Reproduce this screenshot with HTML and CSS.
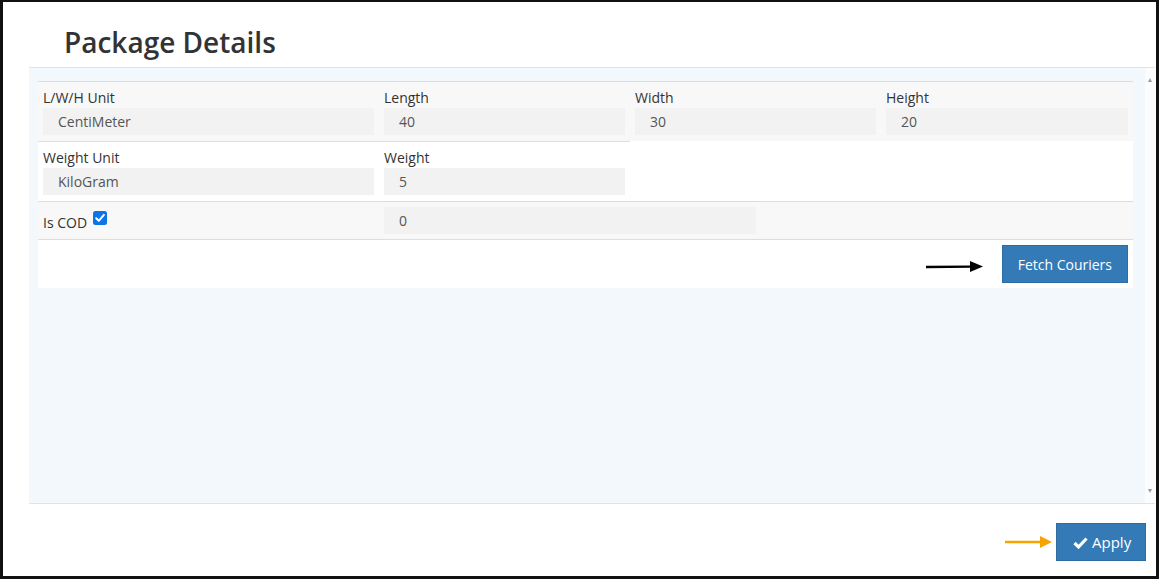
FILE: index.html
```html
<!DOCTYPE html>
<html>
<head>
<meta charset="utf-8">
<link rel="stylesheet" href="styles.css">
</head>
<body>
<div class="frame">
  <h1 class="title">Package Details</h1>
  <div class="panel">
    <div class="panel-body">
      <div class="row row-striped">
        <div class="cell">
          <div class="label">L/W/H Unit</div>
          <div class="input">CentiMeter</div>
        </div>
        <div class="cell">
          <div class="label">Length</div>
          <div class="input">40</div>
        </div>
        <div class="cell">
          <div class="label">Width</div>
          <div class="input">30</div>
        </div>
        <div class="cell">
          <div class="label">Height</div>
          <div class="input">20</div>
        </div>
      </div>
      <div class="row row-plain">
        <div class="cell cell-bordered">
          <div class="label">Weight Unit</div>
          <div class="input">KiloGram</div>
        </div>
        <div class="cell cell-bordered">
          <div class="label">Weight</div>
          <div class="input">5</div>
        </div>
      </div>
      <div class="row row-cod">
        <div class="cell cod-cell">
          <span class="cod-label">Is COD</span>
          <svg class="checkbox" width="14" height="14" viewBox="0 0 14 14">
            <rect x="0" y="0" width="14" height="14" rx="2.5" fill="#0b74e6"/>
            <path d="M3.2 7.2 L5.8 9.8 L10.9 3.9" fill="none" stroke="#fff" stroke-width="2" stroke-linecap="round" stroke-linejoin="round"/>
          </svg>
        </div>
        <div class="cell cod-input-cell">
          <div class="input input-cod">0</div>
        </div>
      </div>
      <div class="row row-action">
        <svg class="arrow" width="58" height="14" viewBox="0 0 58 14">
          <line x1="0" y1="7" x2="46" y2="6.6" stroke="#000" stroke-width="2.4"/>
          <polygon points="44,1 57,6.5 44,12" fill="#000"/>
        </svg>
        <button class="btn">Fetch Couriers</button>
      </div>
    </div>
    <div class="scrollbar">
      <span class="sb-arrow sb-up"></span>
      <span class="sb-arrow sb-down"></span>
    </div>
  </div>
  <div class="footer">
    <svg class="arrow-orange" width="48" height="14" viewBox="0 0 48 14">
      <line x1="0" y1="7" x2="36" y2="7" stroke="#f5a300" stroke-width="2.4"/>
      <polygon points="35,1 47,7 35,13" fill="#f5a300"/>
    </svg>
    <button class="btn btn-apply">
      <svg class="check" width="15" height="13" viewBox="0 0 15 13">
        <path d="M1.5 7 L5.5 11 L13.5 2.5" fill="none" stroke="#fff" stroke-width="3.2" stroke-linejoin="miter"/>
      </svg>
      Apply
    </button>
  </div>
</div>
</body>
</html>
```

FILE: styles.css
```css
* {
  box-sizing: border-box;
}

html, body {
  margin: 0;
  padding: 0;
  background: #ffffff;
}

body {
  font-family: "Open Sans", "Noto Sans", sans-serif;
  font-size: 14px;
  color: #333333;
}

.frame {
  width: 1159px;
  height: 579px;
  border-style: solid;
  border-color: #111111;
  border-width: 2px 3px 3px 3px;
  display: flex;
  flex-direction: column;
  overflow: hidden;
}

.title {
  margin: 0;
  height: 65px;
  padding: 22px 0 0 61px;
  font-size: 28px;
  line-height: 36px;
  font-weight: 600;
  color: #333333;
  letter-spacing: 0;
}

.panel {
  margin-left: 26px;
  margin-right: 0;
  height: 437px;
  border-top: 1px solid #dfe4ea;
  border-bottom: 1px solid #dfe4ea;
  display: flex;
  width: 1126px;
}

.panel-body {
  flex: 1;
  background: #f3f8fd;
  padding: 13px 12px 0 9px;
}

.scrollbar {
  width: 10px;
  background: #fbfcfd;
  position: relative;
}

.sb-arrow {
  position: absolute;
  left: 3px;
  width: 0;
  height: 0;
  border-left: 2px solid transparent;
  border-right: 2px solid transparent;
}

.sb-up {
  top: 10px;
  border-bottom: 4px solid #9a9a9a;
}

.sb-down {
  bottom: 10px;
  border-top: 4px solid #9a9a9a;
}

.row {
  display: grid;
  grid-template-columns: 341px 251px 251px 1fr;
}

.row-striped {
  background: #f8f8f8;
  border-top: 1px solid #dddddd;
}

.row-plain {
  background: #ffffff;
}

.cell {
  padding: 6px 5px 6px 5px;
}

.cell-bordered {
  border-top: 1px solid #dddddd;
}

.label {
  line-height: 20px;
  height: 20px;
  color: #333333;
}

.input {
  height: 27px;
  line-height: 27px;
  background: #f2f2f2;
  padding-left: 15px;
  color: #555555;
}

.row-cod {
  background: #f8f8f8;
  border-top: 1px solid #dddddd;
  border-bottom: 1px solid #dddddd;
}

.row-cod .cell {
  padding: 5px;
}

.cod-cell {
  display: flex;
  align-items: flex-start;
}

.cod-label {
  line-height: 27px;
  position: relative;
  top: 2px;
}

.checkbox {
  display: block;
  margin-top: 4px;
  margin-left: 6px;
}

.cod-input-cell {
  grid-column: 2 / 5;
}

.input-cod {
  width: 372px;
}

.row-action {
  display: flex;
  justify-content: flex-end;
  align-items: center;
  background: #ffffff;
  padding: 5px 5px 5px 5px;
}

.arrow {
  display: block;
  margin-right: 18px;
  margin-top: 6px;
}

.btn {
  font-family: "Open Sans", "Noto Sans", sans-serif;
  font-size: 14px;
  color: #ffffff;
  background: #337ab7;
  border: 1px solid #2e6da4;
  height: 38px;
  padding: 0 15px;
  border-radius: 0;
  display: flex;
  align-items: center;
}

.footer {
  display: flex;
  justify-content: flex-end;
  align-items: center;
  padding: 19px 10px 0 0;
}

.arrow-orange {
  display: block;
  margin-right: 3px;
}

.btn-apply {
  font-size: 15px;
  height: 38px;
  width: 90px;
  padding: 0 0 0 16px;
  gap: 4px;
}

.check {
  display: block;
}
```
